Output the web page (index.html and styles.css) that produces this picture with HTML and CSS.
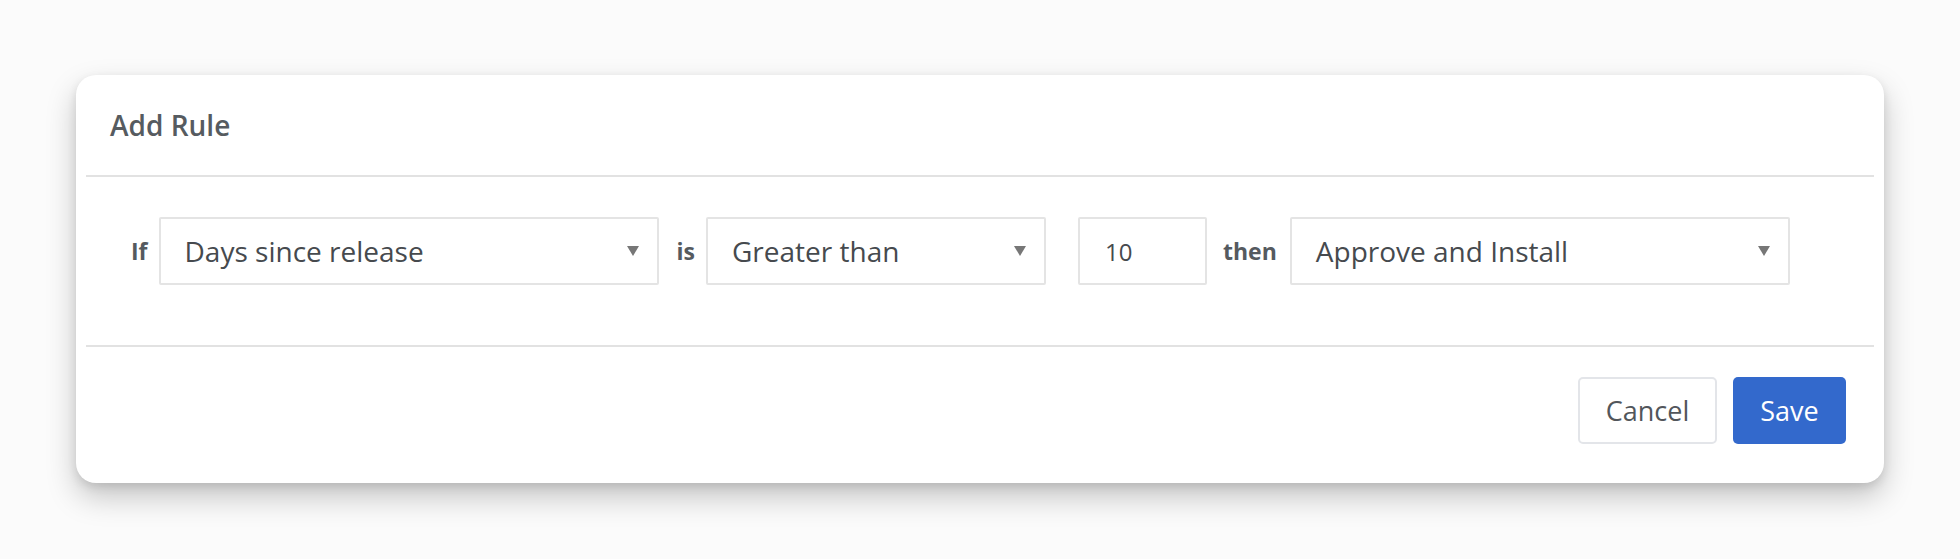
FILE: index.html
```html
<!DOCTYPE html>
<html lang="en">
<head>
  <meta charset="UTF-8" />
  <meta name="viewport" content="width=device-width, initial-scale=1.0" />
  <title>Add Rule</title>
  <link rel="stylesheet" href="styles.css">
</head>
<body>
  <div class="modal">
    <div class="modal-header">
      <h2>Add Rule</h2>
    </div>

    <div class="rule-row">
      <span class="rule-label first">If</span>
      <div class="select select-wide">
        <span>Days since release</span>
        <svg class="caret" width="12" height="10" viewBox="0 0 12 10"><path d="M0 0 H12 L6 10 Z" fill="#777"/></svg>
      </div>

      <span class="rule-label">is</span>
      <div class="select select-mid">
        <span>Greater than</span>
        <svg class="caret" width="12" height="10" viewBox="0 0 12 10"><path d="M0 0 H12 L6 10 Z" fill="#777"/></svg>
      </div>

      <input class="num-input" type="text" value="10">

      <span class="rule-label then">then</span>
      <div class="select select-wide">
        <span>Approve and Install</span>
        <svg class="caret" width="12" height="10" viewBox="0 0 12 10"><path d="M0 0 H12 L6 10 Z" fill="#777"/></svg>
      </div>
    </div>

    <div class="modal-footer">
      <button class="btn btn-cancel">Cancel</button>
      <button class="btn btn-save">Save</button>
    </div>
  </div>
</body>
</html>
```

FILE: styles.css
```css
html {
  background-color: #fbfbfb;
}
body {
  font-family: "Open Sans", Arial, sans-serif;
  background-color: #fbfbfb;
  margin: 0;
  padding: 75px 76px 76px;
  min-height: 559px;
  box-sizing: border-box;
}
.modal {
  background-color: white;
  border-radius: 20px;
  box-shadow: 0 14px 30px rgba(0, 0, 0, 0.22), 0 4px 10px rgba(0, 0, 0, 0.1);
  padding: 0 10px;
  height: 408px;
  box-sizing: border-box;
}
.modal-header {
  height: 100px;
  display: flex;
  align-items: center;
  padding-left: 24px;
  border-bottom: 2px solid #e2e2e2;
}
.modal-header h2 {
  margin: 0;
  font-size: 28px;
  font-weight: 600;
  color: #565b60;
}
.rule-row {
  display: flex;
  align-items: center;
  padding: 40px 0 60px 45px;
  border-bottom: 2px solid #e2e2e2;
}
.rule-label {
  font-size: 23px;
  font-weight: 700;
  color: #555a5f;
  margin: 0 11px 0 18px;
}
.rule-label.first {
  margin-left: 0;
}
.rule-label.then {
  margin: 0 13px 0 16px;
}
.select {
  height: 68px;
  box-sizing: border-box;
  border: 2px solid #e4e4e4;
  border-radius: 2px;
  display: flex;
  align-items: center;
  justify-content: space-between;
  padding: 0 18px 0 24px;
  font-size: 28px;
  color: #464a4e;
}
.select-wide {
  width: 500px;
}
.select-mid {
  width: 340px;
}
.caret {
  display: block;
}
.num-input {
  width: 129px;
  height: 68px;
  box-sizing: border-box;
  border: 2px solid #e4e4e4;
  border-radius: 2px;
  margin-left: 32px;
  padding: 0 0 0 25px;
  font-family: "Open Sans", Arial, sans-serif;
  font-size: 24px;
  color: #464a4e;
  outline: none;
}
.modal-footer {
  display: flex;
  justify-content: flex-end;
  gap: 16px;
  padding: 30px 28px 0 0;
}
.btn {
  height: 67px;
  box-sizing: border-box;
  border-radius: 5px;
  font-family: "Open Sans", Arial, sans-serif;
  font-size: 27px;
  padding: 0 25px;
  cursor: pointer;
}
.btn-cancel {
  width: 139px;
  background-color: white;
  border: 2px solid #e3e5e9;
  color: #52565b;
}
.btn-save {
  width: 113px;
  background-color: #3369cc;
  border: none;
  color: white;
}
```
